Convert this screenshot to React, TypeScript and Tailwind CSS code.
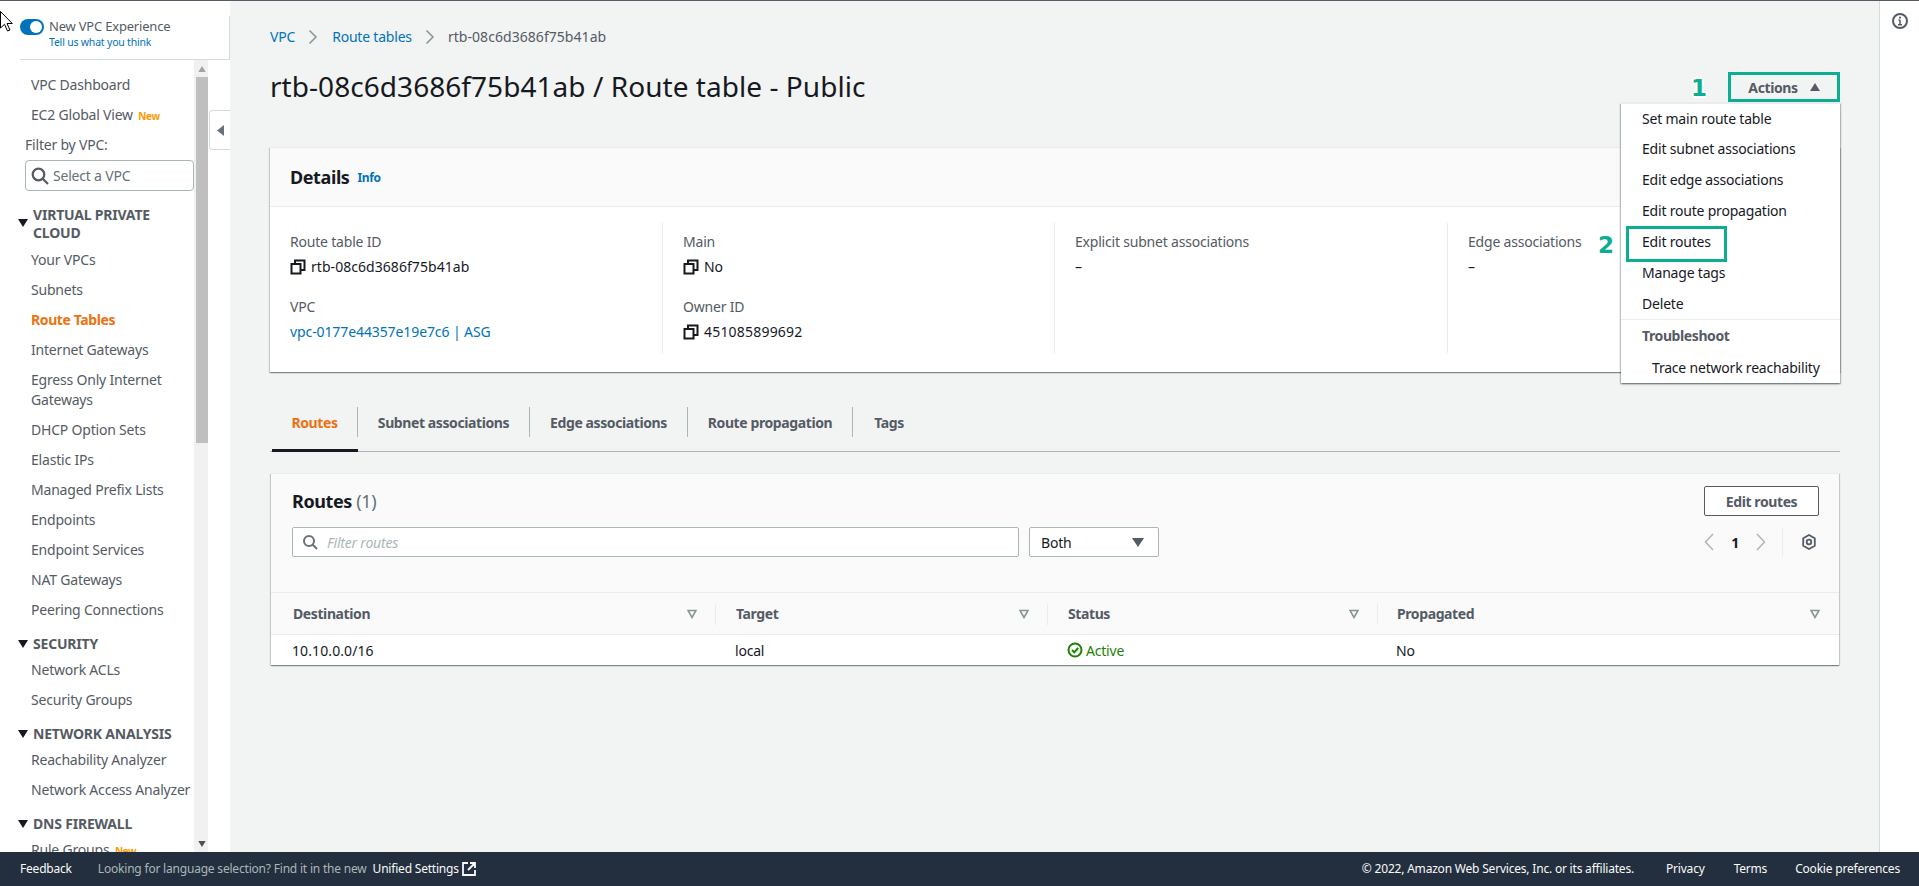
import React from "react";

const b = "font-bold tracking-[-0.4px]";

const Copy = () => (
  <svg width="16" height="16" viewBox="0 0 16 16" fill="none" stroke="#16191f" strokeWidth="2" className="shrink-0">
    <rect x="1.500" y="5" width="9" height="9.500" />
    <path d="M5 5V1.500h9.500V11H10.500" />
  </svg>
);

const Tri = ({ className = "" }: { className?: string }) => (
  <svg width="10" height="8" viewBox="0 0 10 8" className={className}>
    <path d="M0 0h10L5 8z" fill="currentColor" />
  </svg>
);

const SortIcon = () => (
  <svg width="10" height="10" viewBox="0 0 10 10" fill="none" stroke="#879596" strokeWidth="1.600" className="shrink-0">
    <path d="M1 1.500h8L5 8.500z" />
  </svg>
);

const NavItem = ({ children, active, tall }: { children: React.ReactNode; active?: boolean; tall?: boolean }) => (
  <div className={`pl-[31px] pr-[2px] leading-[20px] py-[5px] ${tall ? "h-[50px]" : "h-[30px]"} ${active ? `${b} text-[#ec7211]` : "text-[#545b64]"}`}>
    {children}
  </div>
);

const NewTag = () => <span className={`ml-[2px] text-[10px] ${b} text-[#ff9900]`}>New</span>;

const Section = ({ children, two }: { children: React.ReactNode; two?: boolean }) => (
  <div className={`relative pl-[33px] pr-2 ${two ? "pt-[5px] pb-[3px]" : "pb-[2px]"} font-bold tracking-[-0.2px] text-[#545b64] leading-[18px] uppercase`}>
    <Tri className={`absolute left-[18px] text-[#16191f] ${two ? "top-[18px]" : "top-[5px]"}`} />
    {children}
  </div>
);

const Field = ({ label, children }: { label: string; children: React.ReactNode }) => (
  <div className="mb-5">
    <div className="h-5 leading-5 text-[#545b64]">{label}</div>
    <div className="mt-[5px] h-5 leading-5 flex items-center gap-[5px] text-[#16191f]">{children}</div>
  </div>
);

const Th = ({ label, last, pl }: { label: string; last?: boolean; pl: string }) => (
  <div className={`relative h-full flex items-center justify-between pr-[19px] ${pl}`}>
    <span className={`${b} text-[#545b64]`}>{label}</span>
    <SortIcon />
    {!last && <span className="absolute right-0 top-[11px] h-[21px] w-px bg-[#eaeded]" />}
  </div>
);

const Tab = ({ label, active, w, last }: { label: string; active?: boolean; w: string; last?: boolean }) => (
  <div className={`relative h-[44px] ${w} ${active ? "ml-[2px]" : ""}`}>
    <div className={`h-[30px] flex items-center justify-center ${b} ${active ? "text-[#ec7211]" : "text-[#545b64]"} ${last ? "" : "border-r border-[#aab7b8]"}`}>{label}</div>
    {active && <div className="absolute left-0 right-0 bottom-[-1px] h-[3px] bg-[#16191f]" />}
  </div>
);

const green = "border-[3px] border-[#0bae91]";
const cardShadow = "shadow-[0_1px_1px_0_rgba(0,28,36,0.3),1px_1px_1px_0_rgba(0,28,36,0.15),-1px_1px_1px_0_rgba(0,28,36,0.15)]";
const numberCls = "absolute font-['DejaVu_Sans',sans-serif] font-bold text-[23px] leading-none text-[#0bae91] [text-shadow:2px_0_0_#fff,-2px_0_0_#fff,0_2px_0_#fff,0_-2px_0_#fff]";

export default function App() {
  return (
    <div className="relative h-screen w-full flex flex-col overflow-hidden border-t border-[#545b64] font-['Noto_Sans',sans-serif] text-[14px] tracking-[-0.2px] text-[#16191f] bg-white">
      {/* Mouse pointer */}
      <svg width="13" height="21" viewBox="0 0 13 21" className="absolute left-0 top-[10px] z-30">
        <path d="M0.500 0.500V17L4.500 13.300L7.500 20L10 19L7 12.500H12.300z" fill="#fff" stroke="#000" strokeWidth="1" />
      </svg>

      <div className="flex-1 min-h-0 flex">
        {/* Sidebar */}
        <aside className="relative w-[230px] shrink-0 flex flex-col bg-white">
          <div className="ml-5 h-[59px] shrink-0 relative border-b border-[#d5dbdb]">
            <div className="absolute right-0 top-[15px] bottom-0 w-px bg-[#d5dbdb]" />
            <div className="flex items-start gap-[5px] pt-[18px]">
              <div className="w-6 h-4 rounded-full bg-[#0073bb] flex items-center justify-end pr-[2px] shrink-0">
                <div className="w-3 h-3 rounded-full bg-white" />
              </div>
              <div className="-mt-[2px]">
                <div className="text-[13px] leading-[18px] text-[#545b64]">New VPC Experience</div>
                <div className="text-[10.500px] leading-[15px] text-[#0073bb]">Tell us what you think</div>
              </div>
            </div>
          </div>
          <div className="flex-1 min-h-0 flex">
            <nav className="w-[194px] shrink-0 overflow-hidden pt-[10px]">
              <NavItem>VPC Dashboard</NavItem>
              <NavItem>EC2 Global View <NewTag /></NavItem>
              <div className="pl-[25px] pt-[5px] h-[25px] leading-[20px] text-[#545b64]">Filter by VPC:</div>
              <div className="ml-[25px] mt-[5px] h-[31px] w-[169px] flex items-center gap-[4px] pl-[5px] border border-[#aab7b8] rounded-[4px] text-[#687078]">
                <svg width="18" height="18" viewBox="0 0 18 18" fill="none" stroke="#545b64" strokeWidth="2.200"><circle cx="7.500" cy="7.500" r="5.800" /><path d="M11.500 11.500L17 17" /></svg>
                <span>Select a VPC</span>
              </div>
              <div className="h-[10px]" />
              <Section two>Virtual Private Cloud</Section>
              <NavItem>Your VPCs</NavItem>
              <NavItem>Subnets</NavItem>
              <NavItem active>Route Tables</NavItem>
              <NavItem>Internet Gateways</NavItem>
              <NavItem tall>Egress Only Internet Gateways</NavItem>
              <NavItem>DHCP Option Sets</NavItem>
              <NavItem>Elastic IPs</NavItem>
              <NavItem>Managed Prefix Lists</NavItem>
              <NavItem>Endpoints</NavItem>
              <NavItem>Endpoint Services</NavItem>
              <NavItem>NAT Gateways</NavItem>
              <NavItem>Peering Connections</NavItem>
              <div className="h-[10px]" />
              <Section>Security</Section>
              <NavItem>Network ACLs</NavItem>
              <NavItem>Security Groups</NavItem>
              <div className="h-[10px]" />
              <Section>Network Analysis</Section>
              <NavItem>Reachability Analyzer</NavItem>
              <NavItem>Network Access Analyzer</NavItem>
              <div className="h-[10px]" />
              <Section>DNS Firewall</Section>
              <NavItem>Rule Groups <NewTag /></NavItem>
            </nav>
            <div className="w-[14px] shrink-0 bg-[#f1f1f1] flex flex-col items-end pl-[2px]">
              <div className="h-[17px] w-full flex items-center justify-center"><Tri className="rotate-180 scale-75 text-[#a3a3a3]" /></div>
              <div className="w-full h-[366px] bg-[#bfbfbf]" />
              <div className="mt-auto h-[17px] w-full flex items-center justify-center"><Tri className="scale-75 text-[#505050]" /></div>
            </div>
          </div>
          <div className="absolute right-0 top-[109px] w-[21px] h-[40px] bg-white border border-r-0 border-[#d5dbdb] rounded-l-[4px] flex items-center justify-center">
            <svg width="7" height="11" viewBox="0 0 7 11"><path d="M7 0v11L0 5.500z" fill="#687078" /></svg>
          </div>
        </aside>

        {/* Main */}
        <main className="flex-1 min-w-0 bg-[#f2f3f3] pl-10 pr-[39px]">
          <div className="mt-[26px] h-5 flex items-center leading-5">
            <span className="text-[#0073bb]">VPC</span>
            <svg width="10" height="16" viewBox="0 0 10 16" fill="none" stroke="#879596" strokeWidth="1.500" className="ml-[13px] mr-[14px]"><path d="M1.500 1.500L8 8L1.500 14.500" /></svg>
            <span className="text-[#0073bb]">Route tables</span>
            <svg width="10" height="16" viewBox="0 0 10 16" fill="none" stroke="#879596" strokeWidth="1.500" className="ml-[13px] mr-[13px]"><path d="M1.500 1.500L8 8L1.500 14.500" /></svg>
            <span className="text-[#545b64] tracking-[0.05px]">rtb-08c6d3686f75b41ab</span>
          </div>

          <div className="mt-[25px] h-[30px] flex items-center justify-between">
            <h1 className="text-[28px] leading-[30px] pb-[2px] tracking-[0.05px] font-normal text-[#16191f]">rtb-08c6d3686f75b41ab / Route table - Public</h1>
            <div className={`relative w-[112px] h-[30px] flex items-center justify-center gap-[12px] ${green}`}>
              <span className={`${b} text-[#545b64]`}>Actions</span>
              <Tri className="rotate-180 text-[#545b64]" />
              <span className={`${numberCls} left-[-40px] top-[2px]`}>1</span>
              {/* Dropdown */}
              <div className="absolute right-[-3px] top-[28px] w-[219px] h-[280px] z-20 bg-white border-t border-[#eaeded] shadow-[0_1px_2px_0_rgba(0,28,36,0.45),1px_1px_1px_0_rgba(0,28,36,0.15),-1px_1px_1px_0_rgba(0,28,36,0.15)] text-[#16191f]">
                <div className="h-[29px] pl-[21px] flex items-center">Set main route table</div>
                <div className="h-[31px] pl-[21px] flex items-center">Edit subnet associations</div>
                <div className="h-[31px] pl-[21px] flex items-center">Edit edge associations</div>
                <div className="h-[31px] pl-[21px] flex items-center">Edit route propagation</div>
                <div className="relative h-[31px] pl-[21px] flex items-center">
                  Edit routes
                  <div className={`absolute left-[5px] top-0 w-[101px] h-[36px] ${green}`} />
                  <span className={`${numberCls} left-[-23px] top-[8px]`}>2</span>
                </div>
                <div className="h-[31px] pl-[21px] flex items-center">Manage tags</div>
                <div className="h-[32px] pl-[21px] flex items-center border-b border-[#eaeded]">Delete</div>
                <div className={`h-[31px] pl-[21px] flex items-center ${b} text-[#545b64]`}>Troubleshoot</div>
                <div className="h-[32px] pl-[31px] flex items-center">Trace network reachability</div>
              </div>
            </div>
          </div>

          {/* Details */}
          <section className={`mt-[45px] bg-white border-t border-[#eaeded] ${cardShadow}`}>
            <div className="h-[59px] bg-[#fafafa] border-b border-[#eaeded] pl-5 flex items-center gap-2">
              <h2 className={`text-[18px] ${b} leading-[22px] text-[#16191f]`}>Details</h2>
              <span className={`text-[12px] ${b} mt-[2px] text-[#0073bb]`}>Info</span>
            </div>
            <div className="grid grid-cols-[393px_392px_393px_1fr] pt-[16px] pb-[19px]">
              <div className="h-[130px] border-r border-[#eaeded] pl-5 pt-[9px]">
                <Field label="Route table ID"><Copy /><span className="tracking-[0.05px]">rtb-08c6d3686f75b41ab</span></Field>
                <Field label="VPC"><span className="text-[#0073bb] tracking-[-0.1px]">vpc-0177e44357e19e7c6 | ASG</span></Field>
              </div>
              <div className="h-[130px] border-r border-[#eaeded] pl-5 pt-[9px]">
                <Field label="Main"><Copy />No</Field>
                <Field label="Owner ID"><Copy /><span className="tracking-[0.2px]">451085899692</span></Field>
              </div>
              <div className="h-[130px] border-r border-[#eaeded] pl-5 pt-[9px]">
                <Field label="Explicit subnet associations">–</Field>
              </div>
              <div className="h-[130px] pl-5 pt-[9px]">
                <Field label="Edge associations">–</Field>
              </div>
            </div>
          </section>

          {/* Tabs */}
          <div className="mt-[35px] h-[45px] flex border-b border-[#aab7b8]">
            <Tab label="Routes" active w="w-[86px]" />
            <Tab label="Subnet associations" w="w-[172px]" />
            <Tab label="Edge associations" w="w-[158px]" />
            <Tab label="Route propagation" w="w-[165px]" />
            <Tab label="Tags" w="w-[72px]" last />
          </div>

          {/* Routes */}
          <section className={`mt-[21px] ml-px mr-px bg-white border-t border-[#eaeded] ${cardShadow}`}>
            <div className="bg-[#fafafa] pl-[21px] pr-5 pt-[12px] pb-[35px] border-b border-[#eaeded]">
              <div className="h-[30px] flex items-center justify-between">
                <h2 className={`text-[18px] leading-[22px] ${b} text-[#16191f]`}>Routes <span className="font-normal text-[#687078]">(1)</span></h2>
                <div className={`w-[115px] h-[30px] flex items-center justify-center border border-[#545b64] rounded-[2px] bg-white ${b} text-[#545b64]`}>Edit routes</div>
              </div>
              <div className="mt-[11px] h-[30px] flex items-center">
                <div className="w-[727px] h-full flex items-center gap-[9px] pl-[9px] bg-white border border-[#aab7b8] rounded-[2px]">
                  <svg width="16" height="16" viewBox="0 0 16 16" fill="none" stroke="#687078" strokeWidth="2"><circle cx="7" cy="7" r="5" /><path d="M10.500 10.500L15 15" /></svg>
                  <span className="italic text-[#aab7b8]">Filter routes</span>
                </div>
                <div className="ml-[10px] w-[130px] h-full flex items-center justify-between pl-[11px] pr-[14px] bg-white border border-[#aab7b8] rounded-[2px]">
                  <span>Both</span>
                  <svg width="12" height="9" viewBox="0 0 12 9"><path d="M0 0h12L6 9z" fill="#545b64" /></svg>
                </div>
                <div className="ml-auto h-full flex items-center">
                  <svg width="10" height="18" viewBox="0 0 10 18" fill="none" stroke="#aab7b8" strokeWidth="1.500"><path d="M9 1L1.500 9L9 17" /></svg>
                  <span className="mx-[17px] font-bold text-[#16191f]">1</span>
                  <svg width="10" height="18" viewBox="0 0 10 18" fill="none" stroke="#aab7b8" strokeWidth="1.500"><path d="M1 1L8.500 9L1 17" /></svg>
                  <div className="ml-4 h-full w-px bg-[#eaeded]" />
                  <svg width="16" height="16" viewBox="0 0 16 16" fill="none" stroke="#545b64" strokeWidth="1.800" className="ml-[18px] mr-[2px]">
                    <path d="M8 1l5.800 3.300v7.400L8 15l-5.800-3.300V4.300z" strokeLinejoin="round" />
                    <circle cx="8" cy="8" r="2.300" />
                  </svg>
                </div>
              </div>
            </div>
            <div className="grid grid-cols-[445px_332px_330px_1fr] h-[42px] bg-[#fafafa] border-b border-[#eaeded]">
              <Th label="Destination" pl="pl-[22px]" />
              <Th label="Target" pl="pl-[20px]" />
              <Th label="Status" pl="pl-[20px]" />
              <Th label="Propagated" pl="pl-[19px]" last />
            </div>
            <div className="grid grid-cols-[445px_332px_330px_1fr] h-[30px] items-center text-[#16191f]">
              <div className="pl-[21px] tracking-[0.1px]">10.10.0.0/16</div>
              <div className="pl-[19px]">local</div>
              <div className="pl-[19px] flex items-center gap-[3px] text-[#1d8102]">
                <svg width="16" height="16" viewBox="0 0 16 16" fill="none" stroke="#1d8102" strokeWidth="2"><circle cx="8" cy="8" r="6.500" /><path d="M5 8l2.300 2.300L11.200 6" /></svg>
                Active
              </div>
              <div className="pl-[18px]">No</div>
            </div>
          </section>
        </main>

        {/* Right rail */}
        <div className="w-[40px] shrink-0 bg-white border-l border-[#d5dbdb] flex justify-center pt-[12px]">
          <svg width="16" height="16" viewBox="0 0 16 16" fill="none" stroke="#545b64" strokeWidth="2" className="ml-[1px]">
            <circle cx="8" cy="8" r="7" />
            <path d="M8 7v4.500M6 11.800h4M6.500 7H8" strokeWidth="1.500" />
            <path d="M8 3.800v1.700" />
          </svg>
        </div>
      </div>

      {/* Footer */}
      <footer className="h-[34px] shrink-0 bg-[#232f3e] flex items-center text-[12px] text-[#fafafa]">
        <span className="ml-5">Feedback</span>
        <span className="ml-[26px] text-[#aab7b8]">Looking for language selection? Find it in the new</span>
        <span className="ml-[6px]">Unified Settings</span>
        <svg width="14" height="14" viewBox="0 0 14 14" fill="none" stroke="#fafafa" strokeWidth="1.800" className="ml-[3px]">
          <path d="M6 1H1v12h12V8M8 1h5v5M13 1L6 8" />
        </svg>
        <span className="ml-auto">© 2022, Amazon Web Services, Inc. or its affiliates.</span>
        <span className="ml-[32px]">Privacy</span>
        <span className="ml-[29px]">Terms</span>
        <span className="ml-[28px] mr-[19px]">Cookie preferences</span>
      </footer>
    </div>
  );
}
